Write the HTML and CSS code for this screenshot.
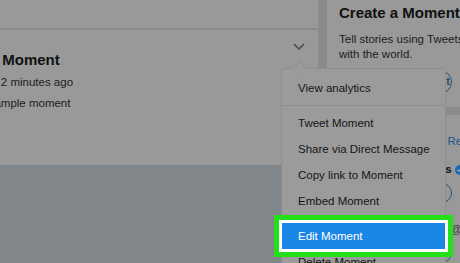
FILE: index.html
```html
<!DOCTYPE html>
<html>
<head>
<meta charset="utf-8">
<link rel="stylesheet" href="styles.css">
</head>
<body>
<div class="page">
  <div class="main">
    <div class="left">
      <div class="card top-card"></div>
      <div class="card moment">
        <div class="moment-body">
          <div class="moment-title">Your Moment</div>
          <div class="moment-meta">Saved 2 minutes ago</div>
          <div class="moment-desc">An example moment</div>
        </div>
        <svg class="caret" width="12" height="7" viewBox="0 0 12 7"><polyline points="1,1 6,6 11,1" fill="none" stroke="#474747" stroke-width="1.5"/></svg>
      </div>
      <div class="left-fill"></div>
    </div>
    <div class="right">
      <div class="card create">
        <div class="create-title">Create a Moment</div>
        <div class="create-desc">
          <div>Tell stories using Tweets</div>
          <div>with the world.</div>
        </div>
        <div class="pill pill-wide">Create new Moment</div>
      </div>
      <div class="card follow">
        <div class="follow-head"><span class="follow-title">Who to follow</span><span class="dot"> · </span><span class="link">Refresh</span></div>
        <div class="user">
          <div class="avatar"></div>
          <div class="user-info">
            <div class="user-line"><span class="user-name">NYT Sports</span><span class="badge"><svg width="9" height="9" viewBox="0 0 10 10"><polyline points="2.5,5.2 4.3,7 7.6,3.3" fill="none" stroke="#9a9a9a" stroke-width="1.5"/></svg></span></div>
            <div class="pill">Follow</div>
          </div>
        </div>
        <div class="user">
          <div class="avatar"></div>
          <div class="user-info">
            <div class="user-line"><span class="user-name">BBC Sport</span> <span class="handle">@BBCSport</span></div>
            <div class="pill">Follow</div>
          </div>
        </div>
      </div>
    </div>
  </div>
  <div class="dropdown">
    <div class="item">View analytics</div>
    <div class="sep"></div>
    <div class="item">Tweet Moment</div>
    <div class="item">Share via Direct Message</div>
    <div class="item">Copy link to Moment</div>
    <div class="item">Embed Moment</div>
    <div class="sep"></div>
    <div class="item active">Edit Moment</div>
    <div class="item">Delete Moment</div>
  </div>
</div>
</body>
</html>
```
FILE: styles.css
```css
* { box-sizing: border-box; }
html, body {
  margin: 0;
  padding: 0;
  width: 460px;
  height: 263px;
  overflow: hidden;
}
body {
  font-family: "Liberation Sans", Arial, sans-serif;
  color: #141414;
  background: #8a8c8e;
}
.page {
  position: relative;
  width: 460px;
  height: 263px;
  overflow: hidden;
}
.main {
  display: flex;
  height: 263px;
  background: #8a8b8d;
}
.left {
  width: 318px;
  flex: none;
  display: flex;
  flex-direction: column;
  gap: 2px;
}
.card {
  background: #999999;
}
.top-card {
  height: 28px;
}
.moment {
  height: 135px;
  display: flex;
  justify-content: space-between;
  padding: 21px 13px 0 0;
}
.moment-body {
  margin-left: -35px;
  white-space: nowrap;
}
.moment-title {
  font-weight: bold;
  font-size: 15px;
  line-height: 18px;
  color: #111;
}
.moment-meta {
  font-size: 11.5px;
  line-height: 15px;
  margin-top: 6px;
  color: #1c1c1c;
}
.moment-desc {
  font-size: 11.5px;
  line-height: 15px;
  margin-top: 6px;
  color: #1c1c1c;
}
.caret {
  margin-top: -8px;
  flex: none;
}
.left-fill {
  flex: 1;
  background: #81868a;
  margin-top: -2px;
}
.right {
  flex: 1;
  margin-left: 9px;
  display: flex;
  flex-direction: column;
  gap: 8px;
  white-space: nowrap;
}
.create {
  height: 107px;
  padding: 4px 0 0 12px;
}
.create-title {
  font-weight: bold;
  font-size: 15px;
  line-height: 18px;
  color: #111;
}
.create-desc {
  font-size: 11.5px;
  line-height: 15px;
  margin-top: 10px;
  color: #1c1c1c;
}
.pill {
  height: 20px;
  border: 1.5px solid #2d4d6c;
  border-radius: 10px;
  font-size: 11px;
  line-height: 17px;
  font-weight: bold;
  color: #2d4d6c;
  padding: 0 6px;
  text-align: center;
  overflow: hidden;
}
.pill-wide {
  width: 113px;
  height: 24px;
  border-radius: 12px;
  line-height: 21px;
  margin-top: 8px;
}
.follow {
  flex: 1;
  padding: 16px 0 0 12px;
}
.follow-head {
  line-height: 18px;
  height: 18px;
}
.follow-title {
  font-weight: bold;
  font-size: 15px;
  color: #111;
}
.dot {
  font-size: 11.5px;
  color: #333;
}
.link {
  font-size: 11.5px;
  color: #1d5690;
}
.user {
  display: flex;
  gap: 10px;
  margin-top: 13px;
}
.user + .user {
  margin-top: 19px;
}
.avatar {
  width: 40px;
  height: 40px;
  border-radius: 50%;
  background: #7c8084;
  flex: none;
}
.user-info {
  display: flex;
  flex-direction: column;
  gap: 6px;
  width: 63px;
}
.user-line {
  font-size: 11.5px;
  line-height: 15px;
  display: flex;
  align-items: center;
  gap: 3px;
}
.user-name {
  font-weight: bold;
  color: #111;
}
.handle {
  color: #3a3a3a;
}
.badge {
  width: 10px;
  height: 10px;
  border-radius: 50%;
  background: #1b68b5;
  display: inline-flex;
  align-items: center;
  justify-content: center;
  flex: none;
}
.dropdown {
  position: absolute;
  left: 281px;
  top: 68px;
  width: 165px;
  height: 220px;
  background: #9b9b9b;
  border: 1px solid #8e8e8e;
  border-radius: 3px;
  padding-top: 6px;
}
.dropdown::before {
  content: "";
  position: absolute;
  left: 12px;
  top: -6px;
  width: 10px;
  height: 10px;
  background: #9b9b9b;
  border-top: 1px solid #8f8f8f;
  border-left: 1px solid #8f8f8f;
  transform: rotate(45deg);
}
.item {
  height: 26px;
  line-height: 26px;
  font-size: 11.5px;
  padding-left: 16px;
  color: #151515;
  white-space: nowrap;
}
.sep {
  height: 1px;
  background: #8c8c8c;
  margin: 4px 0;
}
.item.active {
  position: relative;
  z-index: 1;
  background: #1a86e6;
  color: #ffffff;
  box-shadow: 0 0 0 3px #ffffff, 0 0 0 8px #24e01a;
}
```
